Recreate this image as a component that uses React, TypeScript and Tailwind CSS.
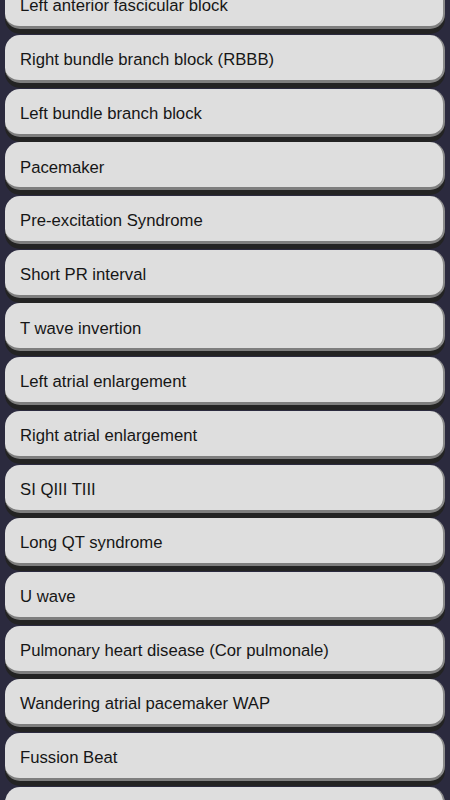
import React from "react";

const items = [
  "Left anterior fascicular block",
  "Right bundle branch block (RBBB)",
  "Left bundle branch block",
  "Pacemaker",
  "Pre-excitation Syndrome",
  "Short PR interval",
  "T wave invertion",
  "Left atrial enlargement",
  "Right atrial enlargement",
  "SI QIII TIII",
  "Long QT syndrome",
  "U wave",
  "Pulmonary heart disease (Cor pulmonale)",
  "Wandering atrial pacemaker WAP",
  "Fussion Beat",
  "",
];

export default function App() {
  return (
    <div className="h-[800px] w-[450px] overflow-hidden bg-[#2b2a3e]">
      <div className="mt-[-18.7px] flex flex-col px-[5px]">
        {items.map((t, i) => (
          <div
            key={i}
            className="mb-[5.7px] flex h-[48px] items-center rounded-[15px] border-b-[3px] border-r-[2px] border-b-[#7e7e7e] border-r-[#8a8a8a] bg-[#dedede] pl-[15px] pt-[6px] shadow-[0_5px_0_#232323]"
          >
            {t && (
              <span
                className="text-[16.7px] leading-none text-[#161616]"
                style={{ fontFamily: "'Liberation Sans', Arial, sans-serif" }}
              >
                {t}
              </span>
            )}
          </div>
        ))}
      </div>
    </div>
  );
}
